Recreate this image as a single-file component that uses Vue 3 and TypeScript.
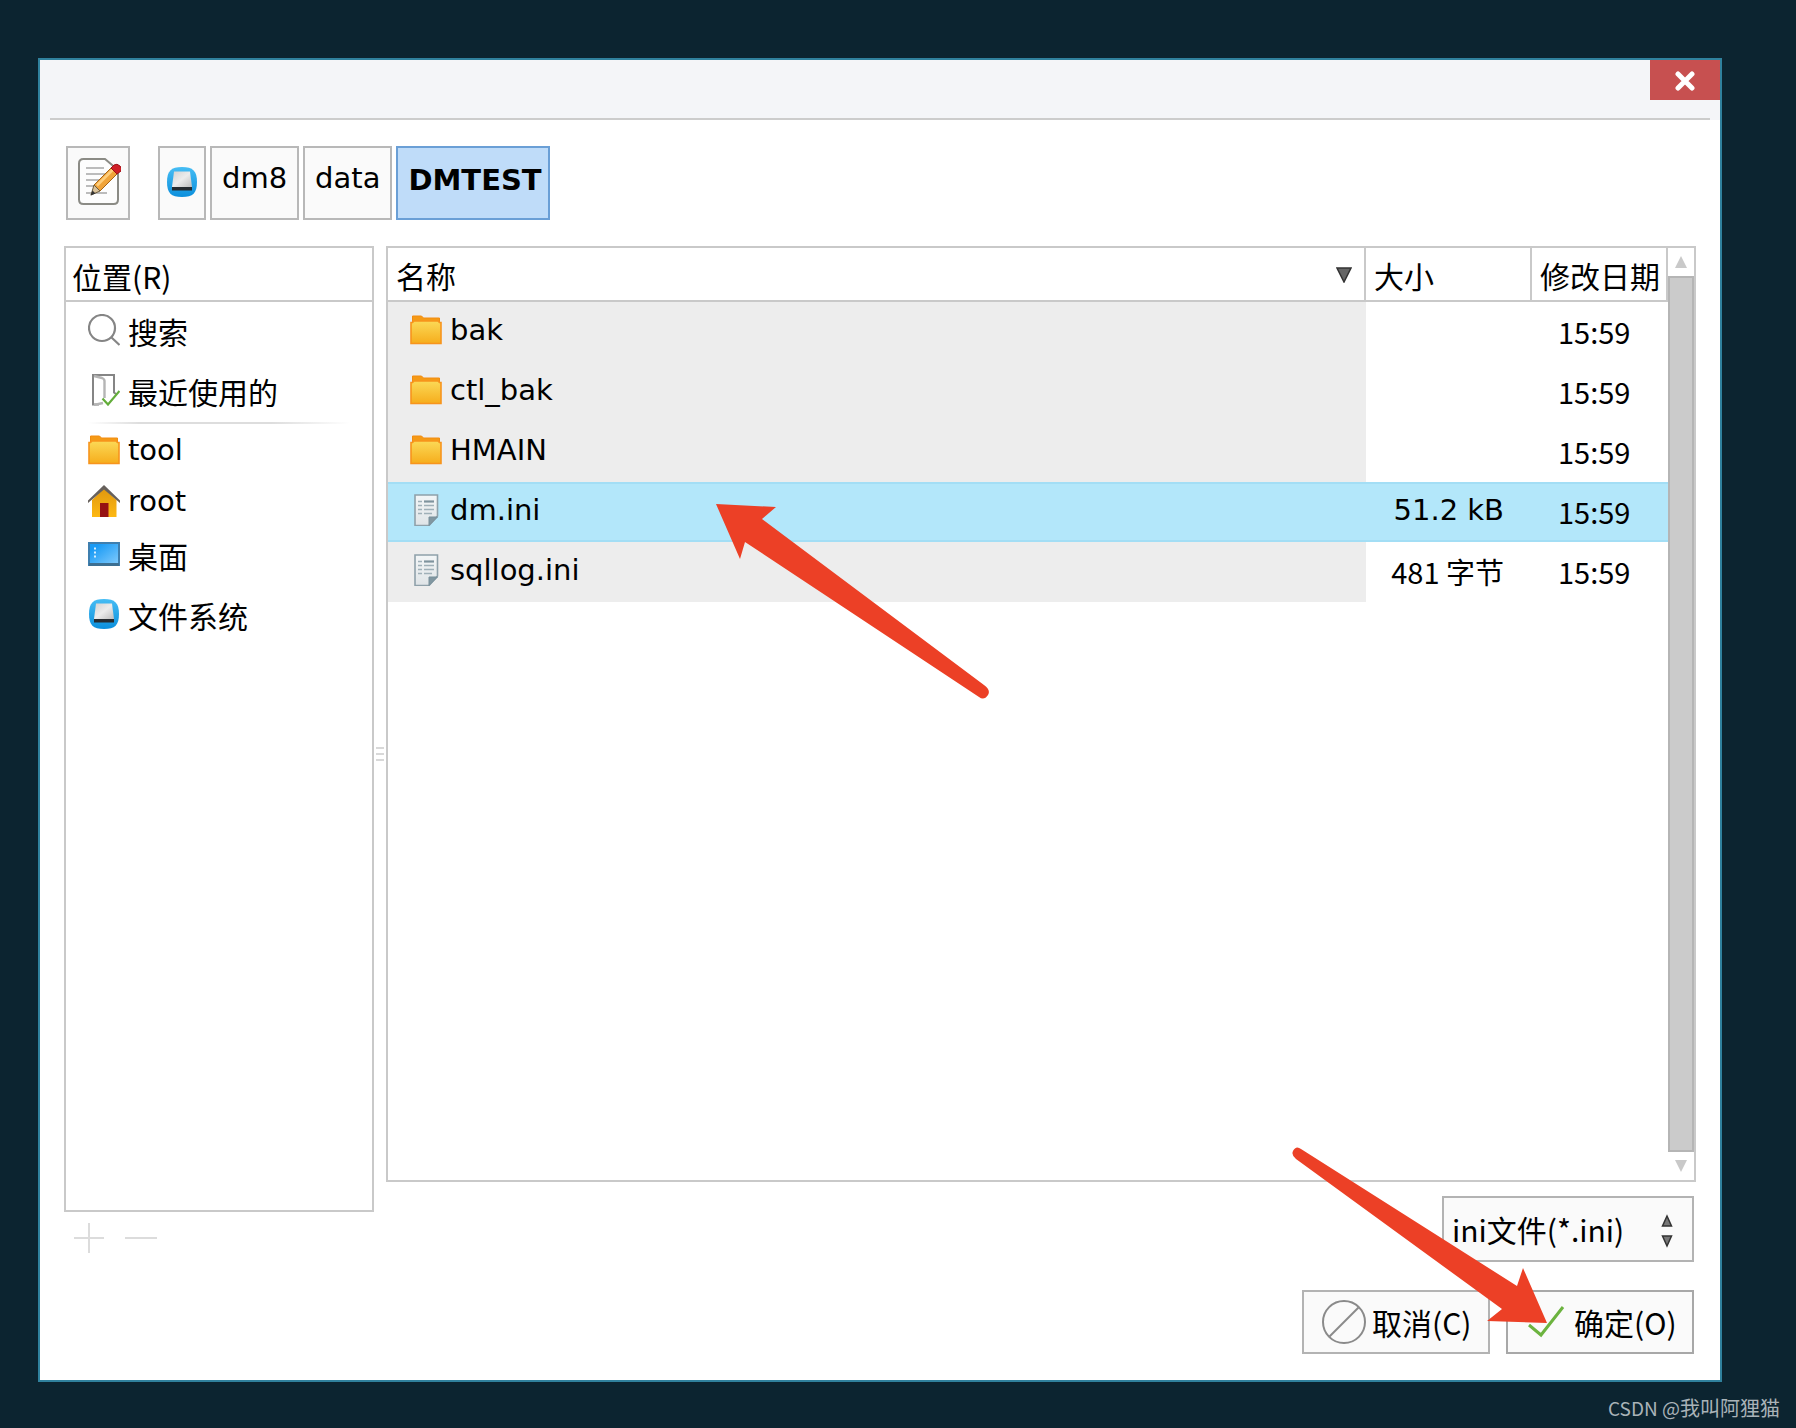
<script setup lang="ts">
import { ref } from 'vue'

interface Place {
  label: string
  icon: 'search' | 'recent' | 'folder' | 'home' | 'desktop' | 'drive'
  cjk: boolean
}

interface Entry {
  name: string
  kind: 'folder' | 'file'
  size: string
  sizeCjk?: boolean
  modified: string
}

const pinned: Place[] = [
  { label: '搜索', icon: 'search', cjk: true },
  { label: '最近使用的', icon: 'recent', cjk: true },
]

const places: Place[] = [
  { label: 'tool', icon: 'folder', cjk: false },
  { label: 'root', icon: 'home', cjk: false },
  { label: '桌面', icon: 'desktop', cjk: true },
  { label: '文件系统', icon: 'drive', cjk: true },
]

const entries: Entry[] = [
  { name: 'bak', kind: 'folder', size: '', modified: '15:59' },
  { name: 'ctl_bak', kind: 'folder', size: '', modified: '15:59' },
  { name: 'HMAIN', kind: 'folder', size: '', modified: '15:59' },
  { name: 'dm.ini', kind: 'file', size: '51.2 kB', modified: '15:59' },
  { name: 'sqllog.ini', kind: 'file', size: '481 字节', sizeCjk: true, modified: '15:59' },
]

const selected = ref('dm.ini')
const filter = ref('ini')
</script>

<template>
  <svg class="defs" width="0" height="0" aria-hidden="true">
    <defs>
      <linearGradient id="g-folder" x1="0" y1="0" x2="0" y2="1">
        <stop offset="0" stop-color="#fbd957" /><stop offset="1" stop-color="#f6ad1c" />
      </linearGradient>
      <linearGradient id="g-drive" x1="0" y1="0" x2="0" y2="1">
        <stop offset="0" stop-color="#46bdf4" /><stop offset="1" stop-color="#0b8fdc" />
      </linearGradient>
      <linearGradient id="g-metal" x1="0" y1="0" x2="1" y2="1">
        <stop offset="0" stop-color="#d2d2d2" /><stop offset="0.5" stop-color="#ececec" /><stop offset="1" stop-color="#bdbdbd" />
      </linearGradient>
      <linearGradient id="g-desk" x1="0" y1="0" x2="1" y2="1">
        <stop offset="0.2" stop-color="#1a9bf5" /><stop offset="1" stop-color="#86cdfd" />
      </linearGradient>
      <linearGradient id="g-house" x1="0" y1="0" x2="0" y2="1">
        <stop offset="0" stop-color="#e0980f" /><stop offset="1" stop-color="#fdb813" />
      </linearGradient>
      <linearGradient id="g-paper" x1="0" y1="0" x2="0" y2="1">
        <stop offset="0" stop-color="#f3f6f7" /><stop offset="1" stop-color="#dfe4e7" />
      </linearGradient>
      <symbol id="i-search" viewBox="0 0 32 32">
        <circle cx="14" cy="14" r="13" fill="none" stroke="#858585" stroke-width="2.200" />
        <path d="M23.500 23.500 31.500 31" stroke="#858585" stroke-width="2.200" />
      </symbol>
      <symbol id="i-recent" viewBox="0 0 32 32">
        <path d="M11 30.500H5V1H26V18.500L28 20" fill="none" stroke="#858585" stroke-width="2" />
        <path d="M6 2 14 4Q16.500 5 16.500 7V24M6 31l9-2" fill="none" stroke="#b5b5b5" stroke-width="2.400" />
        <path d="m14.500 24.500 5.500 6L31.500 17" fill="none" stroke="#63ad3a" stroke-width="2.200" />
      </symbol>
      <symbol id="i-folder" viewBox="0 0 32 32">
        <path d="M2.500 8V2h9l2 2h16v4z" fill="#f59a16" stroke="#f28c10" />
        <path d="M1 8.500h1.500L4 7h24l1.500 1.500H31V29.500H1z" fill="url(#g-folder)" stroke="#f7941d" stroke-width="1.600" />
      </symbol>
      <symbol id="i-home" viewBox="0 0 32 32">
        <path d="M4 15 16 3.500 28.500 15V32H4z" fill="url(#g-house)" />
        <path d="M12 18h8.500v14H12z" fill="#961212" />
        <path d="M0 15.500 16 0l16 15.500v2.500L16 4.500 0 18z" fill="#66605c" />
      </symbol>
      <symbol id="i-desktop" viewBox="0 0 32 32">
        <path d="M1 5h30v22H1z" fill="url(#g-desk)" stroke="#3f7faf" stroke-width="2" />
        <path d="M1 26.500h30" stroke="#3c6f92" stroke-width="3" />
        <path d="M6 9.500h2v2H6zm0 4h2v2H6zm0 4h2v2H6z" fill="#d6efff" />
      </symbol>
      <symbol id="i-drive" viewBox="0 0 32 32">
        <path d="M16 1C27 1 31 5 31 16S27 31 16 31 1 27 1 16 5 1 16 1z" fill="url(#g-drive)" />
        <path d="M8 5.500h16L26 21H6z" fill="url(#g-metal)" />
        <path d="M6 21h20v3.500H6z" fill="#252b30" />
      </symbol>
      <symbol id="i-file" viewBox="0 0 32 32">
        <path d="M5 1h22.500v21L19 31.500H5z" fill="url(#g-paper)" stroke="#8fa1aa" stroke-width="1.600" />
        <path d="M8 7.500h4M8 11.500h4M8 15.500h4M8 19.500h4" stroke="#9fb0b8" stroke-width="1.600" />
        <path d="M14 7.500h10M14 11.500h10M14 15.500h10M14 19.500h8" stroke="#9fb0b8" stroke-width="1.600" />
        <path d="M14 7.500h10" stroke="#7e939d" stroke-width="2" />
        <path d="M19 31.500V23h8.500z" fill="#8197a1" stroke="#78909b" />
      </symbol>
    </defs>
  </svg>

  <div class="screen">
    <main class="dialog">
      <header class="titlebar">
        <button class="close" type="button" aria-label="关闭">
          <svg width="20" height="20" viewBox="0 0 20 20">
            <path d="M3 3 17 17M17 3 3 17" stroke="#fff" stroke-width="5" stroke-linecap="round" />
          </svg>
        </button>
      </header>

      <nav class="pathbar">
        <button class="crumb edit" type="button" aria-label="输入文件名">
          <svg width="46" height="50" viewBox="-3 2 46 50">
            <path d="M5.500 3H27l13 11V43.500Q40 48 35.500 48H5.500Q1 48 1 43.500V7.500Q1 3 5.500 3z" fill="#fdfdfd" stroke="#8b8b85" stroke-width="2" />
            <path d="M8 12h18M8 18h20M8 24h16M8 30h10M8 37h21" stroke="#bcbcbc" stroke-width="2" />
            <path d="M16 29 33 12 39 18 22 35z" fill="#f0a43a" stroke="#a76414" />
            <path d="M19 29.500 35 13.500" stroke="#ffcf7d" stroke-width="2.500" />
            <path d="m16 29 6 6-9 4z" fill="#d8c19a" stroke="#6c5a3a" />
            <path d="m14.500 34.500 3 3-5 2z" fill="#333" />
            <path d="m33 12 3-3q3-2 6 1t1 5l-4 3z" fill="#cf1f26" stroke="#a01016" />
          </svg>
        </button>
        <button class="crumb drive" type="button" aria-label="文件系统">
          <svg width="32" height="32"><use href="#i-drive" /></svg>
        </button>
        <button class="crumb" type="button">dm8</button>
        <button class="crumb" type="button">data</button>
        <button class="crumb current" type="button" aria-current="true">DMTEST</button>
      </nav>

      <div class="panes">
        <section class="left">
          <div class="places">
            <h2 class="head cjk">位置(R)</h2>
            <ul>
              <li v-for="p in pinned" :key="p.label" class="place tall">
                <svg width="32" height="32"><use :href="'#i-' + p.icon" /></svg>
                <span class="cjk">{{ p.label }}</span>
              </li>
            </ul>
            <hr class="rule" />
            <ul>
              <li v-for="p in places" :key="p.label" class="place" :class="{ tall: p.cjk }">
                <svg width="32" height="32"><use :href="'#i-' + p.icon" /></svg>
                <span :class="{ cjk: p.cjk }">{{ p.label }}</span>
              </li>
            </ul>
          </div>
          <div class="tools">
            <button type="button" aria-label="添加" disabled>
              <svg width="32" height="32" viewBox="0 0 32 32"><path d="M1 16h30M16 1v30" stroke="#dcdcdc" stroke-width="2" /></svg>
            </button>
            <button type="button" aria-label="移除" disabled>
              <svg width="32" height="32" viewBox="0 0 32 32"><path d="M0 16h32" stroke="#dcdcdc" stroke-width="2" /></svg>
            </button>
          </div>
        </section>

        <div class="splitter"><i></i><i></i><i></i></div>

        <section class="right">
          <div class="list">
            <div class="view">
              <table>
                <colgroup><col /><col class="c-size" /><col class="c-date" /></colgroup>
                <thead>
                  <tr>
                    <th class="cjk">
                      <div class="sorted">
                        <span>名称</span>
                        <svg width="16" height="16" viewBox="0 0 16 16"><path d="M1 1h14L8 15z" fill="#666" stroke="#333" stroke-width="1.500" /></svg>
                      </div>
                    </th>
                    <th class="cjk">大小</th>
                    <th class="cjk">修改日期</th>
                  </tr>
                </thead>
                <tbody>
                  <tr v-for="e in entries" :key="e.name" :class="{ selected: e.name === selected }" @click="selected = e.name">
                    <td class="name">
                      <div class="cell">
                        <svg width="32" height="32"><use :href="'#i-' + e.kind" /></svg>
                        <span>{{ e.name }}</span>
                      </div>
                    </td>
                    <td class="size" :class="{ cjk: e.sizeCjk }">{{ e.size }}</td>
                    <td class="date cjk">{{ e.modified }}</td>
                  </tr>
                </tbody>
              </table>
            </div>
            <div class="scrollbar">
              <svg width="14" height="14" viewBox="0 0 14 14"><path d="M7 1 13 13H1z" fill="#c9c9c9" /></svg>
              <div class="thumb"></div>
              <svg width="14" height="14" viewBox="0 0 14 14"><path d="M7 13 13 1H1z" fill="#c9c9c9" /></svg>
            </div>
            <svg class="pointer to-file" width="276" height="196" viewBox="0 0 276 196" aria-hidden="true">
              <path d="M0 0 60 3 46 15 268 181Q275 186 272 191 268 197 263 193L29 38 24 55z" fill="#ec4026" />
            </svg>
          </div>
          <label class="filter">
            <select v-model="filter" aria-label="文件类型" class="cjk">
              <option value="ini">ini文件(*.ini)</option>
            </select>
            <svg width="12" height="34" viewBox="0 0 12 34">
              <path d="M6 2 10.500 12h-9zM6 32 10.500 22h-9z" fill="#777" stroke="#333" stroke-width="1.500" />
            </svg>
          </label>
        </section>
      </div>

      <footer class="actions">
        <button class="action cjk" type="button">
          <svg width="44" height="44" viewBox="0 0 44 44">
            <circle cx="22" cy="22" r="21" fill="none" stroke="#8a8a8a" stroke-width="2" />
            <path d="M7.500 36.500 36.500 7.500" stroke="#8a8a8a" stroke-width="2" />
          </svg>
          <span>取消(C)</span>
        </button>
        <button class="action ok cjk" type="button">
          <svg width="44" height="44" viewBox="0 0 44 44">
            <path d="M5 25 17 35 39 7" fill="none" stroke="#6cb33f" stroke-width="3" />
          </svg>
          <span>确定(O)</span>
        </button>
        <svg class="pointer to-ok" width="256" height="178" viewBox="0 0 256 178" aria-hidden="true">
          <path d="M9 2Q4-2 1 4-1 8 4 12L210 162 195 174 255 176 231 121 225 139z" fill="#ec4026" />
        </svg>
      </footer>
    </main>
    <p class="credit"><span class="site">CSDN @</span>我叫阿狸猫</p>
  </div>
</template>

<style>
body {
  margin: 0;
  background: #0c2430;
}
</style>

<style scoped>
* {
  box-sizing: border-box;
}
.defs {
  position: absolute;
}
.screen {
  min-height: 100vh;
  display: flex;
  flex-direction: column;
  padding: 58px 0 0 38px;
  font: 29px/40px "DejaVu Sans", "Noto Sans CJK SC", sans-serif;
  color: #000;
}
button,
select {
  font: inherit;
  color: inherit;
  padding: 0;
  border-radius: 0;
}
.cjk {
  font-family: "Noto Sans CJK SC", sans-serif;
  font-size: 30px;
}
svg {
  flex: none;
}
.dialog {
  flex: 1;
  margin-right: 74px;
  display: flex;
  flex-direction: column;
  background: #fff;
  border: 2px solid #30819d;
}
.titlebar {
  height: 60px;
  display: flex;
  justify-content: flex-end;
  align-items: flex-start;
  background: linear-gradient(#ccc, #ccc) center bottom / calc(100% - 20px) 2px no-repeat, #f4f5f8;
}
.close {
  width: 70px;
  height: 40px;
  padding-top: 2px;
  border: 0;
  background: #c75050;
  display: grid;
  place-items: center;
}
.pathbar {
  display: flex;
  gap: 4px;
  padding: 26px;
}
.crumb {
  height: 74px;
  padding: 0 10px;
  padding-bottom: 10px;
  border: 2px solid #b8b8b8;
  background: #fafafa;
}
.crumb.edit,
.crumb.drive {
  display: grid;
  place-items: center;
  padding: 0;
}
.crumb.edit {
  width: 64px;
  margin-right: 24px;
}
.crumb.drive {
  width: 48px;
  padding-bottom: 2px;
}
.crumb.current {
  padding: 0 6px 6px 10px;
  border-color: #6a9fd6;
  background: #bfdcf9;
  font-weight: bold;
}
.panes {
  flex: 1;
  display: flex;
  padding: 0 24px;
}
.left {
  width: 310px;
  display: flex;
  flex-direction: column;
}
.places {
  flex: 1;
  border: 2px solid #c9c9c9;
}
.head {
  margin: 0;
  height: 54px;
  padding: 6px 6px 0;
  border-bottom: 2px solid #c9c9c9;
  font-weight: normal;
  line-height: 44px;
}
ul {
  list-style: none;
  margin: 0;
  padding: 0;
}
.place {
  display: flex;
  align-items: center;
  gap: 8px;
  height: 51px;
  padding-left: 22px;
}
.place.tall {
  height: 60px;
  padding-bottom: 4px;
}
.place .cjk {
  padding-top: 2px;
}
.rule {
  height: 2px;
  margin: 0 22px;
  border: 0;
  background: linear-gradient(90deg, transparent, #ddd 20%, #ddd 70%, transparent);
}
.tools {
  height: 50px;
  display: flex;
  gap: 20px;
  padding: 10px 9px 0;
}
.tools button {
  height: 32px;
  border: 0;
  background: none;
}
.tools svg {
  display: block;
}
.splitter {
  width: 12px;
  display: flex;
  flex-direction: column;
  align-items: center;
  justify-content: center;
  gap: 4px;
}
.splitter i {
  width: 8px;
  height: 2px;
  background: #d8d8d8;
}
.right {
  flex: 1;
  display: flex;
  flex-direction: column;
  gap: 14px;
}
.list {
  position: relative;
  flex: 1;
  display: flex;
  border: 2px solid #c9c9c9;
}
.view {
  flex: 1;
}
table {
  width: 100%;
  table-layout: fixed;
  border-collapse: separate;
  border-spacing: 0;
}
.c-size {
  width: 166px;
}
.c-date {
  width: 136px;
}
th {
  height: 54px;
  padding: 2px 0 0 8px;
  border: solid #c9c9c9;
  border-width: 0 2px 2px 0;
  font-weight: normal;
  text-align: left;
  white-space: nowrap;
}
.sorted {
  display: flex;
  align-items: center;
  justify-content: space-between;
  padding-right: 12px;
}
td {
  height: 60px;
  padding: 0 0 4px;
}
td.cjk {
  padding-bottom: 2px;
  font-size: 29px;
}
.name {
  background: #ededed;
}
.cell {
  display: flex;
  align-items: center;
  gap: 8px;
  padding-left: 22px;
}
.size {
  padding-right: 28px;
  text-align: right;
}
.date {
  padding-left: 26px;
}
.selected td {
  background: #b3e7fa;
  box-shadow: inset 0 2px #a3def5, inset 0 -2px #a3def5;
}
.scrollbar {
  width: 26px;
  display: flex;
  flex-direction: column;
  align-items: center;
  gap: 7px;
  padding: 7px 0;
}
.thumb {
  flex: 1;
  width: 100%;
  border: 2px solid #b5b5b5;
  background: #cbcbcb;
}
.filter {
  position: relative;
  align-self: flex-end;
  width: 252px;
  height: 66px;
  margin-right: 2px;
}
.filter select {
  appearance: none;
  width: 100%;
  height: 100%;
  padding: 0 40px 0 8px;
  border: 2px solid #b3b3b3;
  background: #fafafa;
}
.filter svg {
  position: absolute;
  right: 21px;
  top: 18px;
  pointer-events: none;
}
.actions {
  position: relative;
  display: flex;
  justify-content: flex-end;
  gap: 16px;
  padding: 28px 26px 26px;
}
.action {
  width: 188px;
  height: 64px;
  display: flex;
  align-items: center;
  gap: 6px;
  padding-left: 18px;
  border: 2px solid #b3b3b3;
  background: #fafafa;
}
.action.ok {
  padding-left: 16px;
  border-color: #a8a8a8;
}
.pointer {
  position: absolute;
  pointer-events: none;
}
.to-file {
  left: 328px;
  top: 256px;
}
.to-ok {
  right: 172px;
  bottom: 55px;
}
.credit {
  margin: 0;
  height: 46px;
  padding: 6px 16px 0 0;
  text-align: right;
  font: 20px/40px "Noto Sans CJK SC", sans-serif;
  color: #a9b3b8;
}
.site {
  font-size: 19px;
}
</style>
